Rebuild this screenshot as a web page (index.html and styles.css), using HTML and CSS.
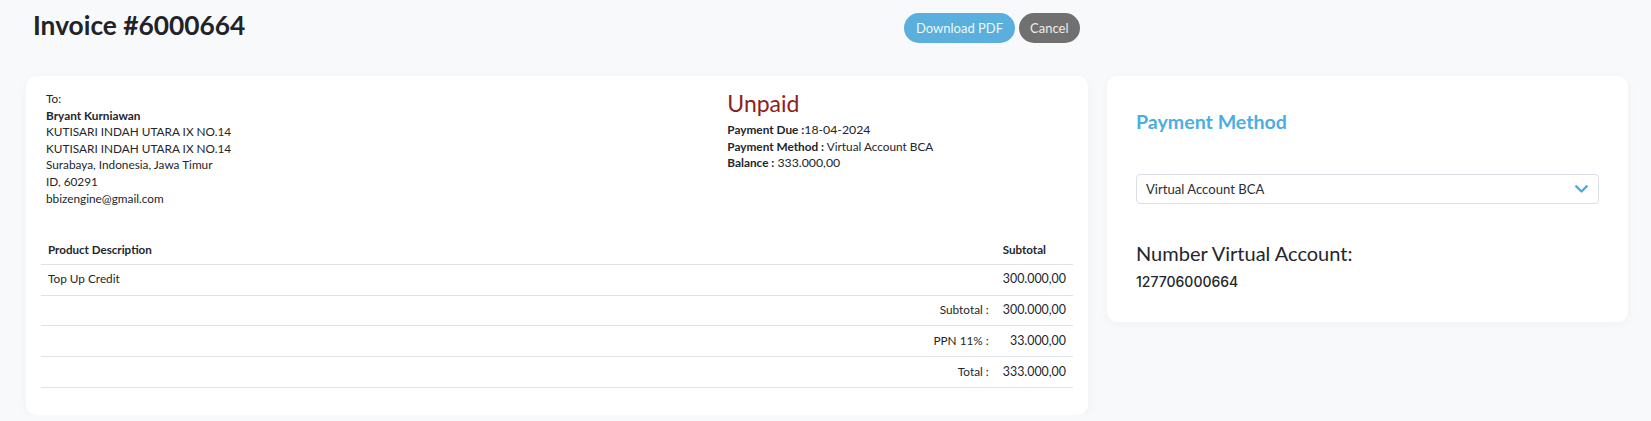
FILE: index.html
```html
<!DOCTYPE html>
<html lang="en">
<head>
<meta charset="utf-8">
<title>Invoice #6000664</title>
<link rel="stylesheet" href="styles.css">
</head>
<body>
<div class="page">
  <header class="page-header">
    <h1 class="page-title">Invoice #6000664</h1>
    <div class="actions">
      <button class="btn btn-primary">Download PDF</button>
      <button class="btn btn-secondary">Cancel</button>
    </div>
  </header>

  <main class="content">
    <section class="card invoice-card">
      <div class="info">
        <div class="address">
          <div>To:</div>
          <div class="strong">Bryant Kurniawan</div>
          <div>KUTISARI INDAH UTARA IX NO.14</div>
          <div>KUTISARI INDAH UTARA IX NO.14</div>
          <div>Surabaya, Indonesia, Jawa Timur</div>
          <div>ID, 60291</div>
          <div>bbizengine@gmail.com</div>
        </div>
        <div class="status">
          <div class="status-title">Unpaid</div>
          <div><span class="strong">Payment Due :</span><span class="digits">18-04-2024</span></div>
          <div><span class="strong">Payment Method :</span> Virtual Account BCA</div>
          <div><span class="strong">Balance :</span> <span class="digits">333.000,00</span></div>
        </div>
      </div>

      <table class="items">
        <thead>
          <tr>
            <th class="col-desc">Product Description</th>
            <th class="col-sub">Subtotal</th>
          </tr>
        </thead>
        <tbody>
          <tr>
            <td>Top Up Credit</td>
            <td class="num">300.000,00</td>
          </tr>
          <tr>
            <td class="label">Subtotal :</td>
            <td class="num">300.000,00</td>
          </tr>
          <tr>
            <td class="label">PPN 11% :</td>
            <td class="num">33.000,00</td>
          </tr>
          <tr>
            <td class="label">Total :</td>
            <td class="num">333.000,00</td>
          </tr>
        </tbody>
      </table>
    </section>

    <aside class="card payment-card">
      <h2 class="pm-title">Payment Method</h2>
      <div class="select">
        <span>Virtual Account BCA</span>
        <svg class="chevron" width="13" height="8" viewBox="0 0 13 8"><polyline points="1.3,1.3 6.5,6.5 11.7,1.3" fill="none" stroke="#4aaee3" stroke-width="2.4" stroke-linecap="round" stroke-linejoin="round"/></svg>
      </div>
      <div class="va-title">Number Virtual Account:</div>
      <div class="va-number">127706000664</div>
    </aside>
  </main>
</div>
</body>
</html>
```

FILE: styles.css
```css
* { box-sizing: border-box; }

html, body {
  margin: 0;
  padding: 0;
}

body {
  background: #f8f9fb;
  font-family: Lato, "Noto Sans", sans-serif;
  color: #23262b;
}

.page {
  padding: 0 23px 0 26px;
}

.page-header {
  display: flex;
  align-items: flex-start;
  height: 76px;
  padding-top: 10px;
}

.page-title {
  flex: 0 0 878px;
  margin: 0;
  padding-left: 7px;
  font-size: 26.3px;
  line-height: 30px;
  font-weight: 700;
  color: #212328;
}

.actions {
  display: flex;
  gap: 4px;
  margin-top: 3px;
}

.btn {
  height: 30px;
  padding: 0 11px;
  border: none;
  border-radius: 15px;
  font-family: inherit;
  font-size: 13px;
  line-height: 30px;
  cursor: pointer;
}

.btn-primary {
  background: #5aafdc;
  color: #eef7fc;
  padding: 0 12px;
}

.btn-secondary {
  background: #707070;
  color: #ececec;
}

.content {
  display: grid;
  grid-template-columns: minmax(0, 1062fr) minmax(0, 521fr);
  column-gap: 19px;
  align-items: start;
}

.card {
  background: #ffffff;
  border-radius: 10px;
  box-shadow: 0 2px 10px rgba(30, 40, 60, 0.04);
}

.invoice-card {
  padding: 15px 15px 15px;
  font-size: 11.8px;
  line-height: 16.6px;
}

.strong { font-weight: 700; }

.digits { font-size: 12.3px; }

.info {
  display: grid;
  grid-template-columns: 2fr 1fr;
  padding: 0 5px;
}

.status-title {
  font-size: 23px;
  line-height: 25px;
  color: #8e2020;
  margin-bottom: 6px;
}

.items {
  width: 100%;
  border-collapse: collapse;
  margin-top: 26px;
  margin-bottom: 12px;
}

.items th,
.items td {
  border-bottom: 1px solid #dfe2e6;
  padding: 6.6px 7px;
}

.items th {
  font-weight: 700;
  font-size: 11.6px;
  text-align: left;
  padding-top: 9px;
  padding-bottom: 5px;
}

.items .col-sub { width: 1%; white-space: nowrap; }

.items td.label { text-align: right; }

.items td.num {
  text-align: right;
  white-space: nowrap;
  font-size: 12.4px;
}

.payment-card {
  padding: 29px 29px 32px;
}

.pm-title {
  margin: 5px 0 40px;
  font-size: 19.6px;
  line-height: 24px;
  font-weight: 700;
  color: #4aaee3;
}

.select {
  display: flex;
  align-items: center;
  justify-content: space-between;
  height: 30px;
  padding: 0 10px 0 9px;
  border: 1px solid #dcdfe5;
  border-radius: 4px;
  font-size: 13.1px;
  color: #2b2e33;
}

.chevron { display: block; }

.va-title {
  margin-top: 37px;
  font-size: 20px;
  line-height: 24px;
  color: #23262b;
}

.va-number {
  margin-top: 8px;
  font-family: Inter, Lato, sans-serif;
  font-size: 14px;
  line-height: 17px;
  font-weight: 500;
  color: #23262b;
}
```
